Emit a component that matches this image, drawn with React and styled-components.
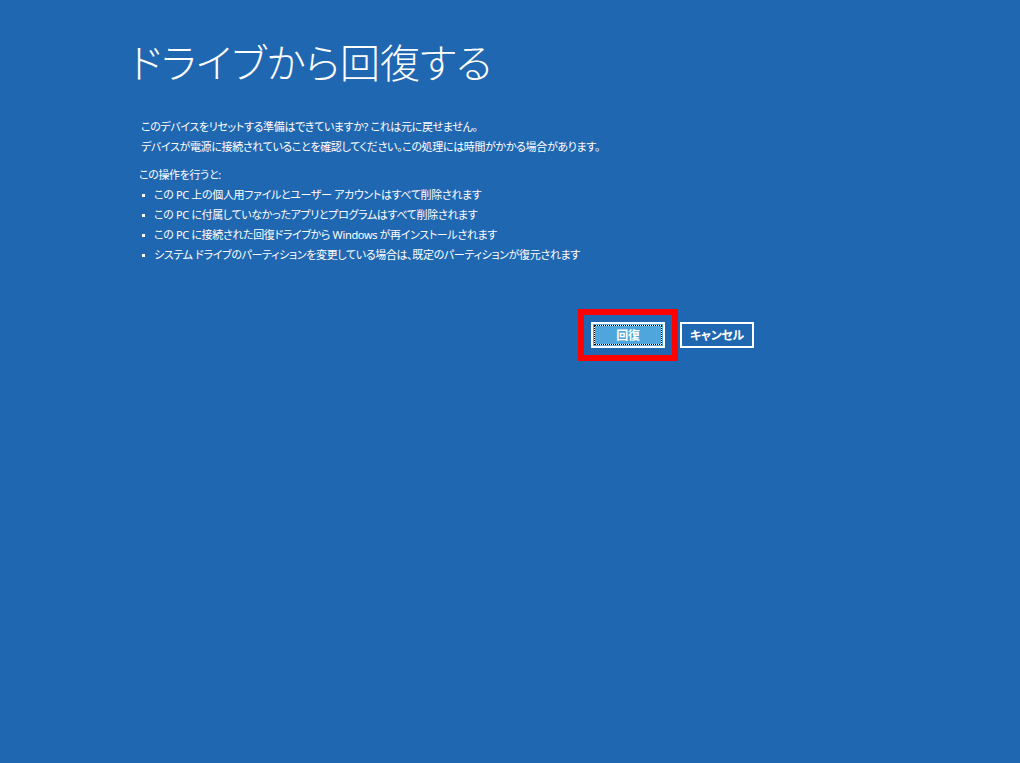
import React from "react";
import styled, { createGlobalStyle } from "styled-components";

const Global = createGlobalStyle`
  html, body { margin: 0; padding: 0; background: #2067b2; }
  body { width: 1020px; height: 763px; overflow: hidden; }
  * { box-sizing: border-box; }
`;

const Page = styled.div`
  width: 1020px;
  height: 763px;
  background: #2067b2;
  color: #ffffff;
  font-family: "Noto Sans", "Noto Sans CJK JP", sans-serif;
  font-feature-settings: "palt";
  padding: 29px 0 0 127px;
  display: flex;
  flex-direction: column;
`;

const Title = styled.h1`
  margin: 0;
  padding-left: 3px;
  font-family: "Noto Sans CJK JP", sans-serif;
  font-weight: 300;
  font-size: 40px;
  line-height: 64px;
  letter-spacing: 0;
`;

const Body = styled.div`
  padding-left: 14px;
  margin-top: 24px;
  display: flex;
  flex-direction: column;
  font-size: 11px;
  line-height: 20px;
  letter-spacing: -0.35px;
`;

const Para = styled.p`
  margin: 0 0 ${(p) => p.$gap || 0}px ${(p) => p.$indent || 0}px;
`;

const List = styled.ul`
  margin: 0;
  padding: 0 0 0 1px;
  list-style: none;
`;

const Item = styled.li`
  display: flex;
  align-items: center;
  gap: 9px;
  &::before {
    content: "";
    width: 3px;
    height: 3px;
    background: #ffffff;
    flex: none;
  }
`;

const Actions = styled.div`
  margin-top: 44px;
  margin-left: 451px;
  display: flex;
  align-items: center;
  gap: 2px;
`;

const Highlight = styled.div`
  border: 6px solid #ff0000;
  padding: 7px;
  display: flex;
`;

const Button = styled.button`
  position: relative;
  width: 74px;
  height: 26px;
  border: 2px solid #ffffff;
  background: ${(p) => (p.$primary ? "#4fa6dc" : "transparent")};
  color: #ffffff;
  font-family: "Noto Sans CJK JP", sans-serif;
  font-feature-settings: "palt";
  font-weight: 700;
  font-size: 12px;
  letter-spacing: -0.3px;
  padding: 0 0 1px;
  cursor: pointer;
  display: flex;
  align-items: center;
  justify-content: center;
  ${(p) =>
    p.$focused &&
    `
    &::before, &::after {
      content: "";
      position: absolute;
      inset: 1px;
      border: 1px solid #ffffff;
    }
    &::after {
      border: 1px dotted #000000;
    }
  `}
`;

export default function App() {
  return (
    <>
      <Global />
      <Page>
        <Title>ドライブから回復する</Title>
        <Body>
          <Para>このデバイスをリセットする準備はできていますか? これは元に戻せません。</Para>
          <Para $gap={8}>デバイスが電源に接続されていることを確認してください。この処理には時間がかかる場合があります。</Para>
          <Para $indent={-2}>この操作を行うと:</Para>
          <List>
            <Item>この PC 上の個人用ファイルとユーザー アカウントはすべて削除されます</Item>
            <Item>この PC に付属していなかったアプリとプログラムはすべて削除されます</Item>
            <Item>この PC に接続された回復ドライブから Windows が再インストールされます</Item>
            <Item>システム ドライブのパーティションを変更している場合は、既定のパーティションが復元されます</Item>
          </List>
        </Body>
        <Actions>
          <Highlight>
            <Button $primary $focused>回復</Button>
          </Highlight>
          <Button>キャンセル</Button>
        </Actions>
      </Page>
    </>
  );
}
